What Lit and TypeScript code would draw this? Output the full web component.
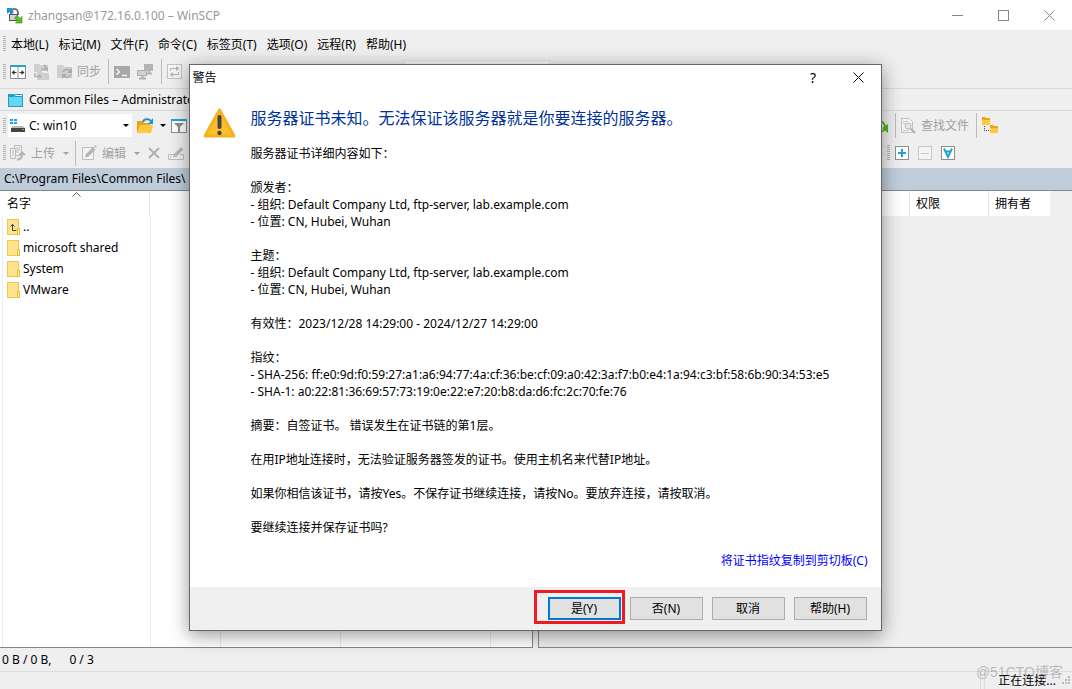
import { LitElement, html, svg, css, nothing, TemplateResult } from "lit";
import { customElement } from "lit/decorators.js";

const icon = (w: number, h: number, body: TemplateResult) =>
  html`<svg class="ic" width=${w} height=${h} viewBox="0 0 ${w} ${h}" aria-hidden="true">${body}</svg>`;

const icons = {
  app: icon(17, 17, svg`
    <path d="M5 9V5.500a3.500 3.500 0 0 1 7 0V8" fill="none" stroke="#777" stroke-width="2"/>
    <path d="M1 1h6L5.500 2.500 8 5 5.500 7.500 3 5 1 7z" fill="#1f8fd6"/>
    <rect x="3.500" y="7.500" width="8" height="6" fill="#d4d4d4" stroke="#555"/>
    <path d="M16 16H9.500l2-2L8.500 11l2.500-2.500 3 3 2-2z" fill="#5cc022" stroke="#2f8a10" stroke-width=".6"/>`),
  sync: icon(16, 16, svg`
    <rect x=".5" y="1.500" width="15" height="13" fill="#fff" stroke="#8a8f93"/>
    <path d="M0 2h16" stroke="#21a5cd" stroke-width="2"/><path d="M8 3v11" stroke="#8a8f93"/>
    <path d="M2 8.500h4.500M9.500 8.500H14" stroke="#333"/><path d="M4.500 6v5L1.500 8.500zM11.500 6v5l3-2.500z" fill="#333"/>`),
  copySync: icon(17, 16, svg`
    <path d="M1 0h5l1 1h8v6H9v1H1zM4 8h5l1 1h6v7H4z" fill="#cfcfcf"/>
    <path d="M8 5.500h5V3M2 9v3.500h5" fill="none" stroke="#b0b0b0" stroke-width="1.500"/>
    <path d="M11 4V0l3 2zM6 15v-5l3 2.500zM11 4l4 4V3z" fill="#b0b0b0"/>`),
  folderSync: icon(17, 16, svg`
    <path d="M0 1h6l1 2h8v11H0z" fill="#cfcfcf"/>
    <path d="M6 8a4 4 0 0 1 7-1M14 10a4 4 0 0 1-7 2" fill="none" stroke="#aaa" stroke-width="1.500"/><path d="M15 4v5h-5zM5 15v-5h5z" fill="#aaa"/>`),
  term: icon(16, 14, svg`<rect y="1" width="16" height="12" fill="#a7a7a7"/><path d="M2.500 4l3 2.800-3 2.800M8 10.500h5" fill="none" stroke="#f2f2f2" stroke-width="1.500"/>`),
  putty: icon(17, 16, svg`
    <rect x="7" y="0" width="9" height="7" fill="#b4b4b4"/><path d="M12 7v2M9 9.500h6" stroke="#b4b4b4" stroke-width="2"/>
    <rect x=".5" y="6.500" width="9" height="5" fill="#cfcfcf" stroke="#b0b0b0"/><path d="M2 14.500h7M5.500 12v2" stroke="#b0b0b0" stroke-width="2"/>`),
  refresh: icon(15, 15, svg`
    <rect x=".5" y=".5" width="14" height="14" fill="#f4f4f4" stroke="#c2c2c2"/>
    <path d="M3.500 7V4.500H10M11.500 8v2.500H5" fill="none" stroke="#b4b4b4"/><path d="M9 2l3.500 2.500L9 7zM6 8l-3.500 2.500L6 13z" fill="#b4b4b4"/>`),
  tab: icon(15, 14, svg`
    <rect x=".5" y="2.500" width="14" height="11" fill="#63d8ee" stroke="#1f9fc2"/><path d="M0 1h6v3H0z" fill="#1f9fc2"/><path d="M7 1.500h7.500v2H7z" fill="#fff" stroke="#1f9fc2"/>`),
  drive: icon(15, 13, svg`
    <path d="M0 0h3v2H0zM4 0h3v2H4zM0 3h3v2H0zM4 3h3v2H4z" fill="#12a6e8"/>
    <path d="M3 7h10l2 2H1z" fill="#bdbdbd"/><rect x="1" y="9" width="14" height="4" fill="#444"/><rect x="12" y="10" width="2" height="1" fill="#4fd34f"/>`),
  open: icon(18, 16, svg`
    <path d="M0 3h6l1 2h6v10H0z" fill="#e8a413"/><path d="M3 7h13l-2 8H0z" fill="#ffc93f"/>
    <path d="M6 4c1-3.500 6-3.500 8-1" fill="none" stroke="#1c93cf" stroke-width="2"/><path d="M16 0v6h-5z" fill="#1c93cf"/>`),
  filter: icon(16, 14, svg`
    <rect x=".5" y=".5" width="15" height="13" fill="#fff" stroke="#8a8f93"/><path d="M0 1h16" stroke="#21a5cd" stroke-width="2"/><path d="M3 4h10L9 8v5H7V8z" fill="#8a8f93"/>`),
  upload: icon(16, 16, svg`
    <path d="M4.500.5h7v10h-7zM6 3h4M6 5h4M6 7h3" fill="#f0f0f0" stroke="#bdbdbd"/><path d="M.5 3.500h5v10h-5zM2 6h2M2 8h2M2 10h2" fill="#f0f0f0" stroke="#bdbdbd"/>
    <path d="M7 14.500c4 0 5-2 5-5" fill="none" stroke="#b4b4b4" stroke-width="2"/><path d="M8.500 10L12 6l4 4z" fill="#b4b4b4"/>`),
  edit: icon(15, 16, svg`
    <path d="M.5 2.500h11v12H.5z" fill="#f4f4f4" stroke="#bcbcbc"/><path d="M3 12.500l1-3.500 7-7 2.500 2.500-7 7zM12 1l1-1 2 2-1 1z" fill="#b4b4b4"/>`),
  cross: icon(12, 12, svg`<path d="M1 1l10 10M11 1L1 11" stroke="#b0b0b0" stroke-width="2"/>`),
  rename: icon(17, 16, svg`<path d="M6 9.500H.5v5h15v-5H12M2.500 11v2" fill="none" stroke="#bcbcbc"/><path d="M5 12.500L6 9l7-7 2.500 2.500-7 7z" fill="#b8b8b8"/>`),
  find: icon(15, 16, svg`
    <path d="M.5.500h8l3 3v11H.5z" fill="#f4f4f4" stroke="#c0c0c0"/><path d="M2 3.500h5M2 5.500h2M2 12.500h6" stroke="#c8c8c8"/>
    <circle cx="7" cy="8" r="3" fill="#e6e6e6" stroke="#b8b8b8"/><path d="M9.500 10.500l4.500 4.500" stroke="#b0b0b0" stroke-width="2"/>`),
  tree: icon(17, 17, svg`
    <path d="M0 0h3l1 1h4v7H0zM8 8h3l1 1h4v7H8z" fill="#e9a916"/><path d="M0 3h8v5H0zM8 11h8v5H8z" fill="#ffc93f"/>
    <path d="M2.500 9v5M2 13.500h6" stroke="#444" stroke-dasharray="1 1"/>`),
  plus: icon(14, 14, svg`<rect x=".5" y=".5" width="13" height="13" fill="#fff" stroke="#8a8f93"/><path d="M3 7h8M7 3v8" stroke="#21a5cd" stroke-width="2"/>`),
  minus: icon(14, 14, svg`<rect x=".5" y=".5" width="13" height="13" fill="#f4f4f4" stroke="#c6c6c6"/><path d="M3 7.500h8" stroke="#c6c6c6"/>`),
  invert: icon(14, 14, svg`<rect x=".5" y=".5" width="13" height="13" fill="#fff" stroke="#8a8f93"/><path d="M3 2.500L7 11l4-8.500M4.500 5.500h5" fill="none" stroke="#21a5cd" stroke-width="2"/>`),
  green: icon(16, 16, svg`<path d="M1 5c4-4 11-3 12 4M2 12c3 3 8 3 11-1" fill="none" stroke="#55b51f" stroke-width="2"/><path d="M16 6v9l-6-5z" fill="#55b51f"/>`),
  warn: icon(33, 30, svg`
    <path d="M16.500 2L31 28H2z" fill="#fcc02c" stroke="#f6b21e" stroke-width="3" stroke-linejoin="round"/>
    <rect x="14.500" y="7" width="4" height="14" rx="2" fill="#444"/><circle cx="16.500" cy="25" r="2.200" fill="#444"/>`),
  folder: (up: boolean) => icon(13, 16, svg`
    <rect x=".5" y=".5" width="11" height="15" fill="#ffe38c" stroke="#edc84c"/><rect x="10.500" y="9.500" width="2" height="6" fill="#fff0b8" stroke="#e8bd3c"/>
    ${up ? svg`<path d="M5.500 5v6.500H9.500M3.500 7.500l2-2 2 2" fill="none" stroke="#444"/>` : nothing}`),
};

const base = css`
  * { box-sizing: border-box; }
  button, select { font: inherit; color: inherit; margin: 0; padding: 0; border: 0; background: none; border-radius: 0; }
  .ic { display: block; flex: none; }
`;

@customElement("cert-dialog")
export class CertDialog extends LitElement {
  static styles = [base, css`
    :host { display: flex; flex-direction: column; width: 693px; max-width: 100%; background: #fff; color: #000;
      border: 1px solid #666; box-shadow: 0 4px 18px rgba(0, 0, 0, .42); }
    .bar { display: flex; align-items: center; height: 24px; padding-left: 3px; }
    .caption { flex: 1; }
    .bar button { width: 45px; height: 24px; display: grid; place-items: center; font-size: 14px; }
    .content { display: flex; gap: 15px; padding: 19px 13px 0; }
    .message { flex: 1; min-width: 0; }
    h1 { margin: 0 0 16px; font-size: 16px; line-height: 21px; font-weight: 400; color: #003399; }
    p { margin: 0 0 17px; line-height: 17px; white-space: pre-line; }
    p:last-child { margin-bottom: 16px; }
    .copy { display: flex; justify-content: flex-end; padding: 0 13px 18px 0; line-height: 17px; }
    a { color: #0000ff; text-decoration: none; }
    .foot { display: flex; justify-content: flex-end; gap: 9px; padding: 10px 14px; background: #f0f0f0; }
    .foot button { width: 73px; height: 23px; background: #e1e1e1; border: 1px solid #adadad; }
    .marked { position: relative; display: flex; }
    .marked::after { content: ""; position: absolute; inset: -7px -4px -4px -14px; border: 3px solid #ed1c24; pointer-events: none; }
    .foot .primary { border: 2px solid #0078d7; }
  `];
  render() {
    return html`
      <div class="bar"><span class="caption">警告</span>
        <button aria-label="Help">?</button>
        <button aria-label="Close">${icon(11, 11, svg`<path d="M.5.5l10 10M10.500.5l-10 10" stroke="#000"/>`)}</button>
      </div>
      <div class="content">
        <div>${icons.warn}</div>
        <div class="message">
          <h1>服务器证书未知。无法保证该服务器就是你要连接的服务器。</h1>
          <p>服务器证书详细内容如下：</p>
          <p>${"颁发者：\n- 组织: Default Company Ltd, ftp-server, lab.example.com\n- 位置: CN, Hubei, Wuhan"}</p>
          <p>${"主题：\n- 组织: Default Company Ltd, ftp-server, lab.example.com\n- 位置: CN, Hubei, Wuhan"}</p>
          <p>有效性：2023/12/28 14:29:00 - 2024/12/27 14:29:00</p>
          <p>${"指纹：\n- SHA-256: ff:e0:9d:f0:59:27:a1:a6:94:77:4a:cf:36:be:cf:09:a0:42:3a:f7:b0:e4:1a:94:c3:bf:58:6b:90:34:53:e5\n- SHA-1: a0:22:81:36:69:57:73:19:0e:22:e7:20:b8:da:d6:fc:2c:70:fe:76"}</p>
          <p>摘要：自签证书。 错误发生在证书链的第1层。</p>
          <p>在用IP地址连接时，无法验证服务器签发的证书。使用主机名来代替IP地址。</p>
          <p>如果你相信该证书，请按Yes。不保存证书继续连接，请按No。要放弃连接，请按取消。</p>
          <p>要继续连接并保存证书吗?</p>
        </div>
      </div>
      <div class="copy"><a href="#copy">将证书指纹复制到剪切板(C)</a></div>
      <div class="foot">
        <span class="marked"><button class="primary">是(Y)</button></span>
        <button>否(N)</button><button>取消</button><button>帮助(H)</button>
      </div>`;
  }
}

@customElement("app-root")
export class AppRoot extends LitElement {
  static styles = [base, css`
    :host { display: flex; flex-direction: column; position: relative; min-height: 100vh; background: #efefef; color: #000;
      font-family: "Noto Sans", "Noto Sans CJK SC", sans-serif; font-size: 12px; line-height: 17px; overflow: hidden; }
    .title { display: flex; align-items: center; gap: 5px; height: 30px; padding-left: 6px; background: #fff; color: #999; }
    .title span { flex: 1; }
    .title button { width: 46px; height: 30px; display: grid; place-items: center; }
    .row { display: flex; align-items: center; white-space: nowrap; }
    .menu { height: 28px; gap: 10px; padding-left: 3px; }
    .grip { width: 3px; height: 16px; background: repeating-linear-gradient(#b4b4b4 0 1px, transparent 1px 2px); flex: none; }
    .menu .grip { margin-right: -5px; }
    .tools { height: 27px; padding-left: 3px; gap: 7px; margin-bottom: 3px; }
    .tools .grip { margin-right: -3px; }
    .tools .sep { margin-right: -2px; }
    .tools button { display: flex; align-items: center; gap: 3px; }
    .off { color: #a0a0a0; }
    .sep { width: 1px; height: 25px; background: #bcbcbc; flex: none; }
    .combo { width: 147px; height: 24px; margin-left: 214px; background: #f7f7f7; border: 1px solid #e4e4e4; }
    .tabs { height: 23px; border: solid #d9d9d9; border-width: 1px 0; padding-left: 8px; gap: 6px; }
    .panes { flex: 1; display: grid; grid-template-columns: 533fr 534fr; gap: 5px; }
    .pane { display: flex; flex-direction: column; min-width: 0; }
    .bar { height: 29px; gap: 5px; padding-left: 3px; }
    .bar button { display: flex; align-items: center; gap: 5px; }
    .low { height: 28px; gap: 8px; padding-bottom: 2px; }
    .low .grip { margin-right: -4px; }
    .low .sep { margin: 0 -2px; }
    .low .caret { margin-left: 3px; }
    .drive { display: flex; align-items: center; gap: 4px; background: #fff; height: 23px; width: 124px; padding-left: 2px; margin-left: -3px; }
    .drive select { appearance: none; flex: 1; outline: 0; }
    .caret { width: 0; border: solid transparent; border-width: 3px 3px 0; border-top-color: currentColor; flex: none; }
    .drive .caret { margin-right: 3px; }
    .path { height: 23px; padding-left: 4px; background: #bfcddb; border-bottom: 1px solid #828790; line-height: 22px; white-space: nowrap; overflow: hidden; }
    .list { flex: 1; display: flex; background: #fff; border: solid #828790; border-width: 0 1px 1px 0; padding-left: 2px; }
    table { width: 100%; border-collapse: separate; border-spacing: 0; table-layout: fixed; }
    th { position: relative; height: 25px; padding: 0 0 0 5px; text-align: left; font-weight: 400; border-right: 1px solid #e5e5e5; }
    th:last-child { border: 0; }
    .sort { position: absolute; top: 1px; left: 70px; }
    td { height: 21px; padding: 0 0 0 4px; border-left: 1px solid #e2eefb; }
    .filler td { height: auto; }
    .name { display: flex; align-items: center; gap: 3px; }
    .c1 { width: 148px; } .c2 { width: 70px; } .c3 { width: 120px; } .c4 { width: 150px; }
    .end { justify-content: flex-end; }
    .bar.one { padding-right: 73px; gap: 7px; }
    .one .sep { margin-right: -2px; }
    .bar.two { padding-right: 117px; gap: 9px; }
    .remote { background: #efefef; border-width: 0 0 1px 1px; padding: 0 22px 0 0; align-items: flex-start; }
    .remote th { background: #fff; padding-left: 6px; }
    .r2 { width: 79px; } .r3 { width: 61px; }
    .status { height: 24px; padding-left: 2px; gap: 18px; border-bottom: 1px solid #dcdcdc; }
    .foot { height: 17px; justify-content: flex-end; padding-right: 1px; gap: 6px; }
    .foot .pair { width: 5px; height: 17px; border: solid #dcdcdc; border-width: 0 1px; margin-right: 7px; }
    .mark { position: absolute; right: 9px; bottom: 7px; font: 14px/20px "Liberation Sans", "Noto Sans CJK SC", sans-serif; color: rgba(120, 120, 120, .45); }
    .overlay { position: absolute; inset: 0; display: flex; align-items: center; justify-content: center; padding: 6px 2px 0 0; }
  `];

  render() {
    const menus = ["本地(L)", "标记(M)", "文件(F)", "命令(C)", "标签页(T)", "选项(O)", "远程(R)", "帮助(H)"];
    const files = ["..", "microsoft shared", "System", "VMware"];
    return html`
      <header class="title">${icons.app}<span>zhangsan@172.16.0.100 – WinSCP</span>
        <div class="row">
          <button aria-label="Minimize">${icon(11, 11, svg`<path d="M0 5.500h11" stroke="#888"/>`)}</button>
          <button aria-label="Maximize">${icon(11, 11, svg`<rect x=".5" y=".5" width="10" height="10" fill="none" stroke="#888"/>`)}</button>
          <button aria-label="Close">${icon(11, 11, svg`<path d="M.5.5l10 10M10.500.5l-10 10" stroke="#888"/>`)}</button>
        </div>
      </header>
      <nav class="row menu"><i class="grip"></i>${menus.map((m) => html`<button>${m}</button>`)}</nav>
      <div class="row tools off">
        <i class="grip"></i>
        <button aria-label="Synchronize browsing">${icons.sync}</button><button aria-label="Compare">${icons.copySync}</button>
        <button>${icons.folderSync}同步</button><i class="sep"></i>
        <button aria-label="Console">${icons.term}</button><button aria-label="PuTTY">${icons.putty}</button><i class="sep"></i>
        <button aria-label="Refresh">${icons.refresh}</button>
        <select class="combo" aria-label="Transfer preset"></select>
      </div>
      <div class="row tabs">${icons.tab}<span>Common Files – Administrator</span></div>
      <main class="panes">
        <section class="pane">
          <div class="row bar"><i class="grip"></i>
            <label class="drive">${icons.drive}<select aria-label="Drive"><option>C: win10</option></select><i class="caret"></i></label>
            <button aria-label="Open directory">${icons.open}<i class="caret"></i></button>
            <button aria-label="Filter">${icons.filter}</button>
          </div>
          <div class="row bar low off"><i class="grip"></i>
            <button>${icons.upload}上传<i class="caret"></i></button><i class="sep"></i>
            <button>${icons.edit}编辑<i class="caret"></i></button>
            <button aria-label="Delete">${icons.cross}</button><button aria-label="Rename">${icons.rename}</button>
          </div>
          <div class="path">C:\\Program Files\\Common Files\\</div>
          <div class="list">
            <table>
              <thead><tr><th class="c1">名字<span class="sort">${icon(9, 5, svg`<path d="M.5 4.500l4-4 4 4" fill="none" stroke="#666"/>`)}</span></th>
                <th class="c2"></th><th class="c3"></th><th class="c4"></th><th></th></tr></thead>
              <tbody>
                ${files.map((f, i) => html`<tr><td><div class="name">${icons.folder(i === 0)}${f}</div></td><td></td><td></td><td></td><td></td></tr>`)}
                <tr class="filler"><td></td><td></td><td></td><td></td><td></td></tr>
              </tbody>
            </table>
          </div>
        </section>
        <section class="pane">
          <div class="row bar one end off"><button aria-label="Reload">${icons.green}</button><i class="sep"></i>
            <button>${icons.find}查找文件</button><i class="sep"></i><button aria-label="Tree">${icons.tree}</button></div>
          <div class="row bar low two end"><i class="grip"></i><button aria-label="Select">${icons.plus}</button>
            <button aria-label="Unselect">${icons.minus}</button><button aria-label="Invert">${icons.invert}</button></div>
          <div class="path"></div>
          <div class="list remote">
            <table><thead><tr><th></th><th class="r2">权限</th><th class="r3">拥有者</th></tr></thead></table>
          </div>
        </section>
      </main>
      <div class="row status"><span>0 B / 0 B,</span><span>0 / 3</span></div>
      <footer class="row foot"><i class="pair"></i><span>正在连接...</span>
        ${icon(9, 9, svg`<path d="M6 0h2v2H6zM3 3h2v2H3zM6 3h2v2H6zM0 6h2v2H0zM3 6h2v2H3zM6 6h2v2H6z" fill="#bbb"/>`)}</footer>
      <div class="mark">@51CTO博客</div>
      <div class="overlay"><cert-dialog></cert-dialog></div>`;
  }
}
